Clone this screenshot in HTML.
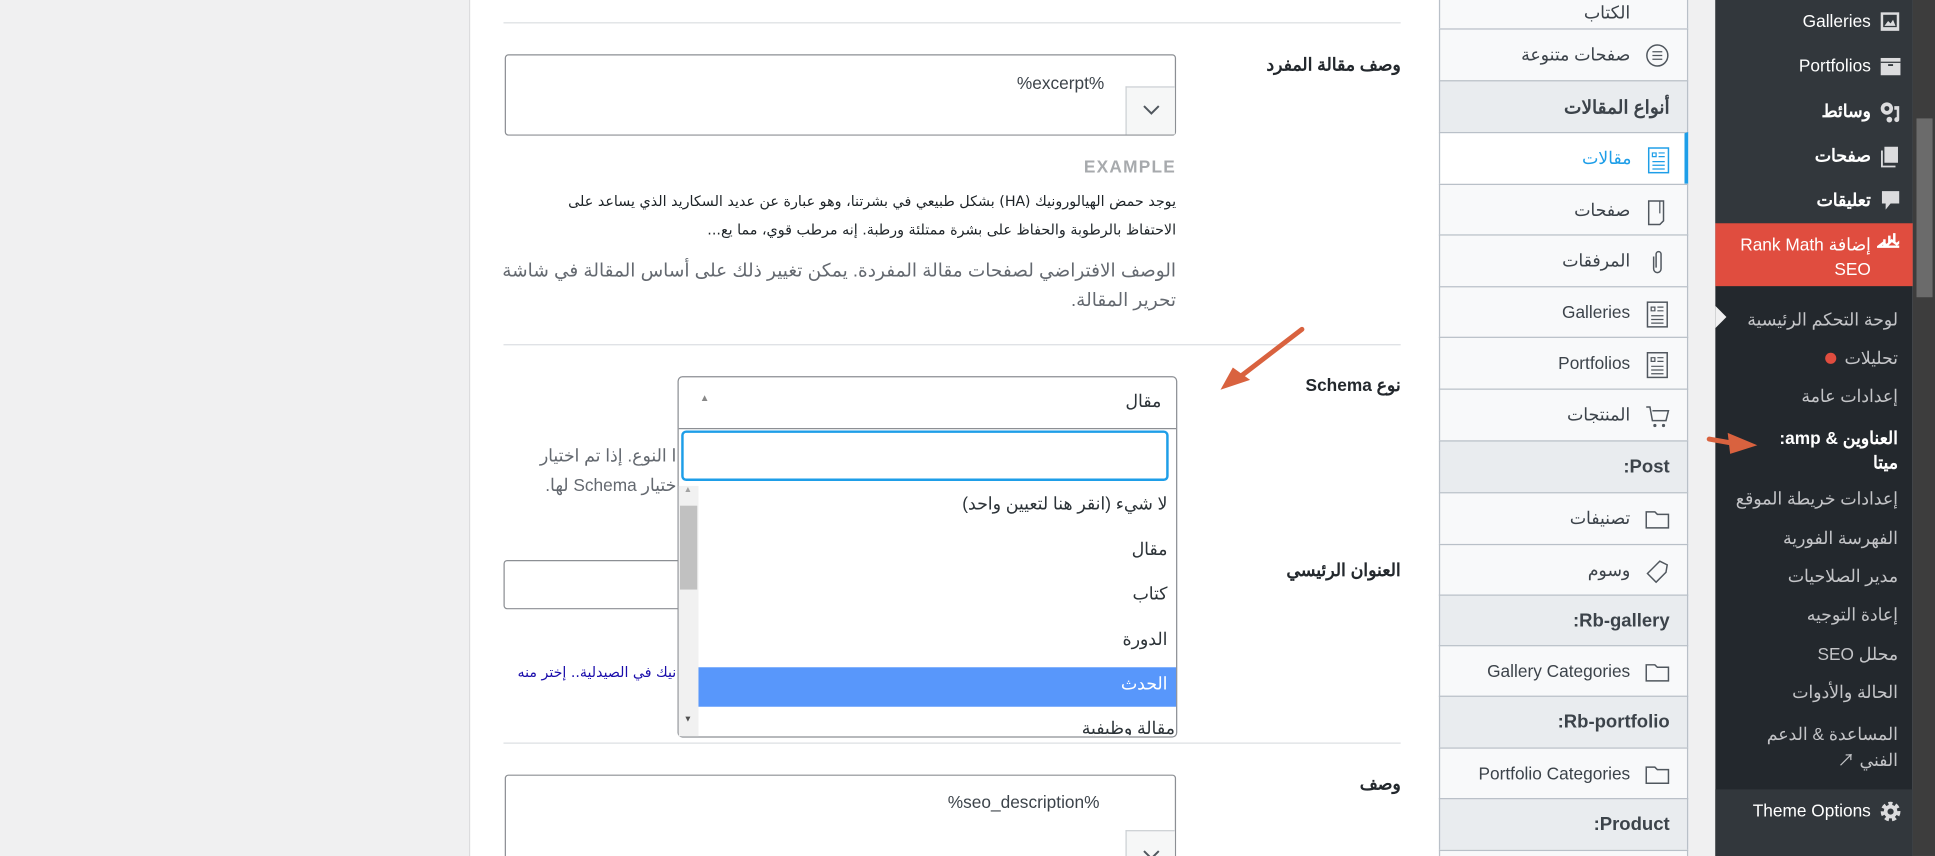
<!DOCTYPE html>
<html><head><meta charset="utf-8"><style>
*{margin:0;padding:0;box-sizing:border-box}
html,body{width:1935px;height:856px;overflow:hidden;background:#f0f0f1}
#w{position:absolute;left:0;top:0;width:1568px;height:694px;transform:scale(1.23406,1.2334);transform-origin:0 0;font-family:"Liberation Sans","Noto Sans CJK SC",sans-serif;font-size:14px;color:#3c434a;overflow:hidden}
.a{position:absolute;white-space:nowrap}
.r{direction:rtl;text-align:right}
.hr{position:absolute;left:408px;width:727px;height:1px;background:#dcdfe3}
.lbl{font-weight:bold;color:#23282d;font-size:14px}
.ta{position:absolute;border:1px solid #8c8f94;border-radius:3px;background:#fff}
.btn{position:absolute;background:#f6f7f7;border-left:1px solid #ccd0d4;border-top:1px solid #ccd0d4}
.tab{position:absolute;left:1166px;width:202px;height:42px;border:1px solid #b9c0c8;border-bottom:none;background:#f8f9fa;color:#3c434a;font-size:14px}
.tab .t{position:absolute;right:46px;top:12px;direction:rtl}
.tab svg{position:absolute;right:14px;top:11px}
.hd{background:#e9ecef}
.hd .t{right:14px;font-weight:bold;font-size:15px;color:#3c434a}
.m{position:absolute;right:30px;color:#f0f0f1;font-size:14px;direction:rtl;white-space:nowrap;text-align:right}
.mi{position:absolute;right:52px;color:#fff;font-size:14px;direction:rtl;white-space:nowrap}
.ic{position:absolute;left:1523px;width:18px;height:18px}
</style></head><body><div id="w">
<div style="position:absolute;left:380px;top:0;width:786px;height:694px;background:#fff;border-left:1px solid #dcdcde"></div>
<div class="hr" style="top:18px"></div>
<div class="a r lbl" style="right:433px;top:44px">وصف مقالة المفرد</div>
<div class="ta" style="left:409px;top:44px;width:544px;height:66px"></div>
<div class="a" style="left:824px;top:59px;color:#3c434a">%excerpt%</div>
<div class="btn" style="left:912px;top:70px;width:40px;height:39px"><svg width="40" height="38"><path d="M14 15l6 6 6-6" stroke="#50575e" stroke-width="1.6" fill="none"/></svg></div>
<div class="a" style="right:615px;top:127px;color:#a7aaad;font-weight:bold;font-size:14px;letter-spacing:1px">EXAMPLE</div>
<div class="a r" style="right:615px;top:152px;width:536px;white-space:normal;font-size:11.6px;line-height:23px;color:#1d2327;font-family:'DejaVu Sans',sans-serif;letter-spacing:-0.2px">يوجد حمض الهيالورونيك (HA) بشكل طبيعي في بشرتنا، وهو عبارة عن عديد السكاريد الذي يساعد على الاحتفاظ بالرطوبة والحفاظ على بشرة ممتلئة ورطبة. إنه مرطب قوي، مما يع...</div>
<div class="a r" style="right:615px;top:208px;width:548px;white-space:normal;font-size:15px;line-height:24px;color:#646970">الوصف الافتراضي لصفحات مقالة المفردة. يمكن تغيير ذلك على أساس المقالة في شاشة تحرير المقالة.</div>
<div class="hr" style="top:279px"></div>
<div class="a r lbl" style="right:433px;top:304px">نوع Schema</div>
<svg class="a" style="left:985px;top:262px" width="75" height="58"><path d="M70 5L14 48" stroke="#d9623f" stroke-width="4" stroke-linecap="round"/><path d="M4 54L28 46L14 36Z" fill="#d9623f"/></svg>
<div class="a r" style="right:1020px;top:357px;color:#646970;line-height:24px">ا النوع. إذا تم اختيار<br>ختيار Schema لها.</div>
<div class="a r lbl" style="right:433px;top:454px">العنوان الرئيسي</div>
<div class="ta" style="left:408px;top:454px;width:145px;height:40px"></div>
<div class="a r" style="right:1020px;top:538px;color:#1a0dab;font-size:11.5px;font-family:'DejaVu Sans',sans-serif">نيك في الصيدلية.. إختر منه</div>
<div class="hr" style="top:602px"></div>
<div class="a r lbl" style="right:433px;top:627px">وصف</div>
<div class="ta" style="left:409px;top:628px;width:544px;height:80px"></div>
<div class="a" style="left:768px;top:642px">%seo_description%</div>
<div class="btn" style="left:912px;top:673px;width:40px;height:21px"><svg width="40" height="21"><path d="M14 16l6 6 6-6" stroke="#50575e" stroke-width="1.6" fill="none"/></svg></div>
<div style="position:absolute;left:549px;top:305px;width:405px;height:293px;border:1px solid #8c8f94;border-radius:4px;background:#fff"></div>
<div class="a" style="left:567px;top:318px;font-size:8px;color:#888">▲</div>
<div class="a r" style="right:627px;top:317px;color:#2c3338">مقال</div>
<div style="position:absolute;left:550px;top:347px;width:403px;height:1px;background:#8c8f94"></div>
<div style="position:absolute;left:552px;top:349px;width:395px;height:41px;border:2px solid #1e9ee8;border-radius:4px;background:#fff"></div>
<div style="position:absolute;left:550px;top:394px;width:16px;height:203px;background:#f1f1f1"></div>
<div style="position:absolute;left:551px;top:410px;width:14px;height:68px;background:#c1c1c1"></div>
<div class="a" style="left:554px;top:394px;font-size:7px;color:#a3a3a3">▲</div>
<div class="a" style="left:554px;top:580px;font-size:7px;color:#505050">▼</div>
<div class="a r" style="right:622px;top:400px;color:#2c3338">لا شيء (انقر هنا لتعيين واحد)</div>
<div class="a r" style="right:622px;top:437px;color:#2c3338">مقال</div>
<div class="a r" style="right:622px;top:473px;color:#2c3338">كتاب</div>
<div class="a r" style="right:622px;top:510px;color:#2c3338">الدورة</div>
<div style="position:absolute;left:566px;top:541px;width:387px;height:32px;background:#5897fb"></div>
<div class="a r" style="right:622px;top:546px;color:#fff">الحدث</div>
<div style="position:absolute;left:566px;top:580px;width:386px;height:16px;overflow:hidden"><div class="a r" style="right:0;top:2px;color:#2c3338">مقالة وظيفية</div></div>
<div class="tab" style="top:-19px;height:42px"><span class="t" style="top:20px">الكتاب</span></div>
<div class="tab" style="top:23px"><span class="t">صفحات متنوعة</span><svg width="20" height="20"><circle cx="10" cy="10" r="8.5" fill="none" stroke="#50575e" stroke-width="1.2"/><path d="M6 7h8M6 10h8M6 13h8" stroke="#50575e"/></svg></div>
<div class="tab hd" style="top:65px"><span class="t">أنواع المقالات</span></div>
<div class="tab" style="top:107px;background:#fff;border-right:3px solid #1e9ee8"><span class="t" style="right:43px;color:#1e9ee8">مقالات</span><svg width="20" height="22" style="right:11px"><rect x="2" y="1" width="16" height="20" fill="none" stroke="#1e9ee8" stroke-width="1.2"/><path d="M5 5h3v3H5zM10 5h5M10 8h5M5 12h10M5 15h10M5 18h10" stroke="#1e9ee8" fill="none"/></svg></div>
<div class="tab" style="top:149px"><span class="t">صفحات</span><svg width="20" height="22"><path d="M3 2h12v16l-3 3H3z" fill="none" stroke="#50575e" stroke-width="1.2"/><path d="M12 2v10" stroke="#50575e"/></svg></div>
<div class="tab" style="top:190px"><span class="t">المرفقات</span><svg width="20" height="22"><path d="M7 6v10a3 3 0 006 0V4a2 2 0 00-4 0v11" fill="none" stroke="#50575e" stroke-width="1.2"/></svg></div>
<div class="tab" style="top:232px"><span class="t">Galleries</span><svg width="20" height="22"><rect x="2" y="1" width="16" height="20" fill="none" stroke="#50575e" stroke-width="1.2"/><path d="M5 5h3v3H5zM10 5h5M10 8h5M5 12h10M5 15h10M5 18h10" stroke="#50575e" fill="none"/></svg></div>
<div class="tab" style="top:273px"><span class="t">Portfolios</span><svg width="20" height="22"><rect x="2" y="1" width="16" height="20" fill="none" stroke="#50575e" stroke-width="1.2"/><path d="M5 5h3v3H5zM10 5h5M10 8h5M5 12h10M5 15h10M5 18h10" stroke="#50575e" fill="none"/></svg></div>
<div class="tab" style="top:315px"><span class="t">المنتجات</span><svg width="20" height="22"><path d="M1 3h3l2 11h11l2-8H6" fill="none" stroke="#50575e" stroke-width="1.2"/><circle cx="8" cy="18" r="1.3" fill="#50575e"/><circle cx="15" cy="18" r="1.3" fill="#50575e"/></svg></div>
<div class="tab hd" style="top:357px"><span class="t">Post:</span></div>
<div class="tab" style="top:399px"><span class="t">تصنيفات</span><svg width="20" height="20"><path d="M1 4h7l2 2h9v11H1z" fill="none" stroke="#50575e" stroke-width="1.2"/></svg></div>
<div class="tab" style="top:441px"><span class="t">وسوم</span><svg width="20" height="20"><path d="M12 2l6 3-1 6-8 8-7-7 8-8z" fill="none" stroke="#50575e" stroke-width="1.2"/></svg></div>
<div class="tab hd" style="top:482px"><span class="t">Rb-gallery:</span></div>
<div class="tab" style="top:523px"><span class="t">Gallery Categories</span><svg width="20" height="20"><path d="M1 4h7l2 2h9v11H1z" fill="none" stroke="#50575e" stroke-width="1.2"/></svg></div>
<div class="tab hd" style="top:564px"><span class="t">Rb-portfolio:</span></div>
<div class="tab" style="top:606px"><span class="t">Portfolio Categories</span><svg width="20" height="20"><path d="M1 4h7l2 2h9v11H1z" fill="none" stroke="#50575e" stroke-width="1.2"/></svg></div>
<div class="tab hd" style="top:647px"><span class="t">Product:</span></div>
<div class="tab" style="top:689px;height:5px"></div>
<div style="position:absolute;left:1390px;top:0;width:160px;height:694px;background:#23282d"></div>
<div style="position:absolute;left:1390px;top:0;width:160px;height:181px;background:#32373c"></div>
<div style="position:absolute;left:1390px;top:640px;width:160px;height:54px;background:#32373c"></div>
<div style="position:absolute;left:1390px;top:181px;width:160px;height:51px;background:#e04d3f"></div>
<svg class="a" style="left:1390px;top:248px" width="10" height="20"><path d="M0 0L9 9L0 18Z" fill="#f0f0f1"/></svg>
<div class="mi" style="top:9px">Galleries</div>
<svg class="ic" style="top:9px"><rect x="1" y="1" width="15" height="15" fill="#dcdcde"/><rect x="3" y="3" width="11" height="10" fill="#32373c"/><path d="M4 12l3-4 2 2 2-3 2 5z" fill="#dcdcde"/></svg>
<div class="mi" style="top:45px">Portfolios</div>
<svg class="ic" style="top:45px"><rect x="1" y="2" width="16" height="14" fill="#dcdcde"/><rect x="1" y="5" width="16" height="1" fill="#32373c"/><rect x="7" y="7" width="4" height="1.5" fill="#32373c"/></svg>
<div class="mi" style="top:82px;font-weight:bold">وسائط</div>
<svg class="ic" style="top:82px"><circle cx="6" cy="6" r="5" fill="#dcdcde"/><circle cx="6" cy="6" r="2" fill="#32373c"/><path d="M12 4h4v11a2 2 0 11-2-2V7h-2z" fill="#dcdcde"/><circle cx="8" cy="15" r="2.3" fill="#dcdcde"/></svg>
<div class="mi" style="top:118px;font-weight:bold">صفحات</div>
<svg class="ic" style="top:118px"><path d="M4 1h11v13H4z" fill="#dcdcde"/><path d="M2 4v13h11" stroke="#dcdcde" stroke-width="1.5" fill="none"/></svg>
<div class="mi" style="top:154px;font-weight:bold">تعليقات</div>
<svg class="ic" style="top:154px"><path d="M2 1h14v10H9l-4 5v-5H2z" fill="#dcdcde"/></svg>
<div class="a r" style="right:52px;top:188px;color:#fff;line-height:20px;font-size:14px">إضافة Rank Math<br>SEO</div>
<svg class="ic" style="top:186px;left:1521px" width="22" height="18"><path d="M1 14l4-3 3 2 4-4 4 3 5-4-1 6H1z M6 8v5M10 5v6M14 3v8" stroke="#fff" stroke-width="2" fill="none"/></svg>
<div class="m" style="top:251px;color:#c3c4c7">لوحة التحكم الرئيسية</div>
<div class="m" style="top:282px;color:#c3c4c7">تحليلات</div>
<div class="a" style="left:1479px;top:286px;width:9px;height:9px;border-radius:50%;background:#e04d3f"></div>
<div class="m" style="top:313px;color:#c3c4c7">إعدادات عامة</div>
<div class="m" style="top:345px;color:#fff;font-weight:bold;line-height:20px">العناوين &amp; amp:<br>ميتا</div>
<div class="m" style="top:396px;color:#c3c4c7">إعدادات خريطة الموقع</div>
<div class="m" style="top:428px;color:#c3c4c7">الفهرسة الفورية</div>
<div class="m" style="top:459px;color:#c3c4c7">مدير الصلاحيات</div>
<div class="m" style="top:490px;color:#c3c4c7">إعادة التوجيه</div>
<div class="m" style="top:522px;color:#c3c4c7">محلل SEO</div>
<div class="m" style="top:553px;color:#c3c4c7">الحالة والأدوات</div>
<div class="m" style="top:585px;color:#c3c4c7;line-height:21px">المساعدة &amp; الدعم<br>الفني ↗</div>
<div class="mi" style="top:649px">Theme Options</div>
<svg class="ic" style="top:649px"><circle cx="9" cy="9" r="6" fill="none" stroke="#dcdcde" stroke-width="4" stroke-dasharray="3 2.3"/><circle cx="9" cy="9" r="4" fill="none" stroke="#dcdcde" stroke-width="3"/></svg>
<svg class="a" style="left:1380px;top:346px" width="46" height="24"><path d="M5 10L28 14" stroke="#d9623f" stroke-width="4" stroke-linecap="round"/><path d="M44 15L20 5L22 22Z" fill="#d9623f"/></svg>
<div style="position:absolute;left:1550px;top:0;width:18px;height:694px;background:#3d3d3d"></div>
<div style="position:absolute;left:1553px;top:96px;width:13px;height:145px;background:#6b6b6b"></div>
</div></body></html>
